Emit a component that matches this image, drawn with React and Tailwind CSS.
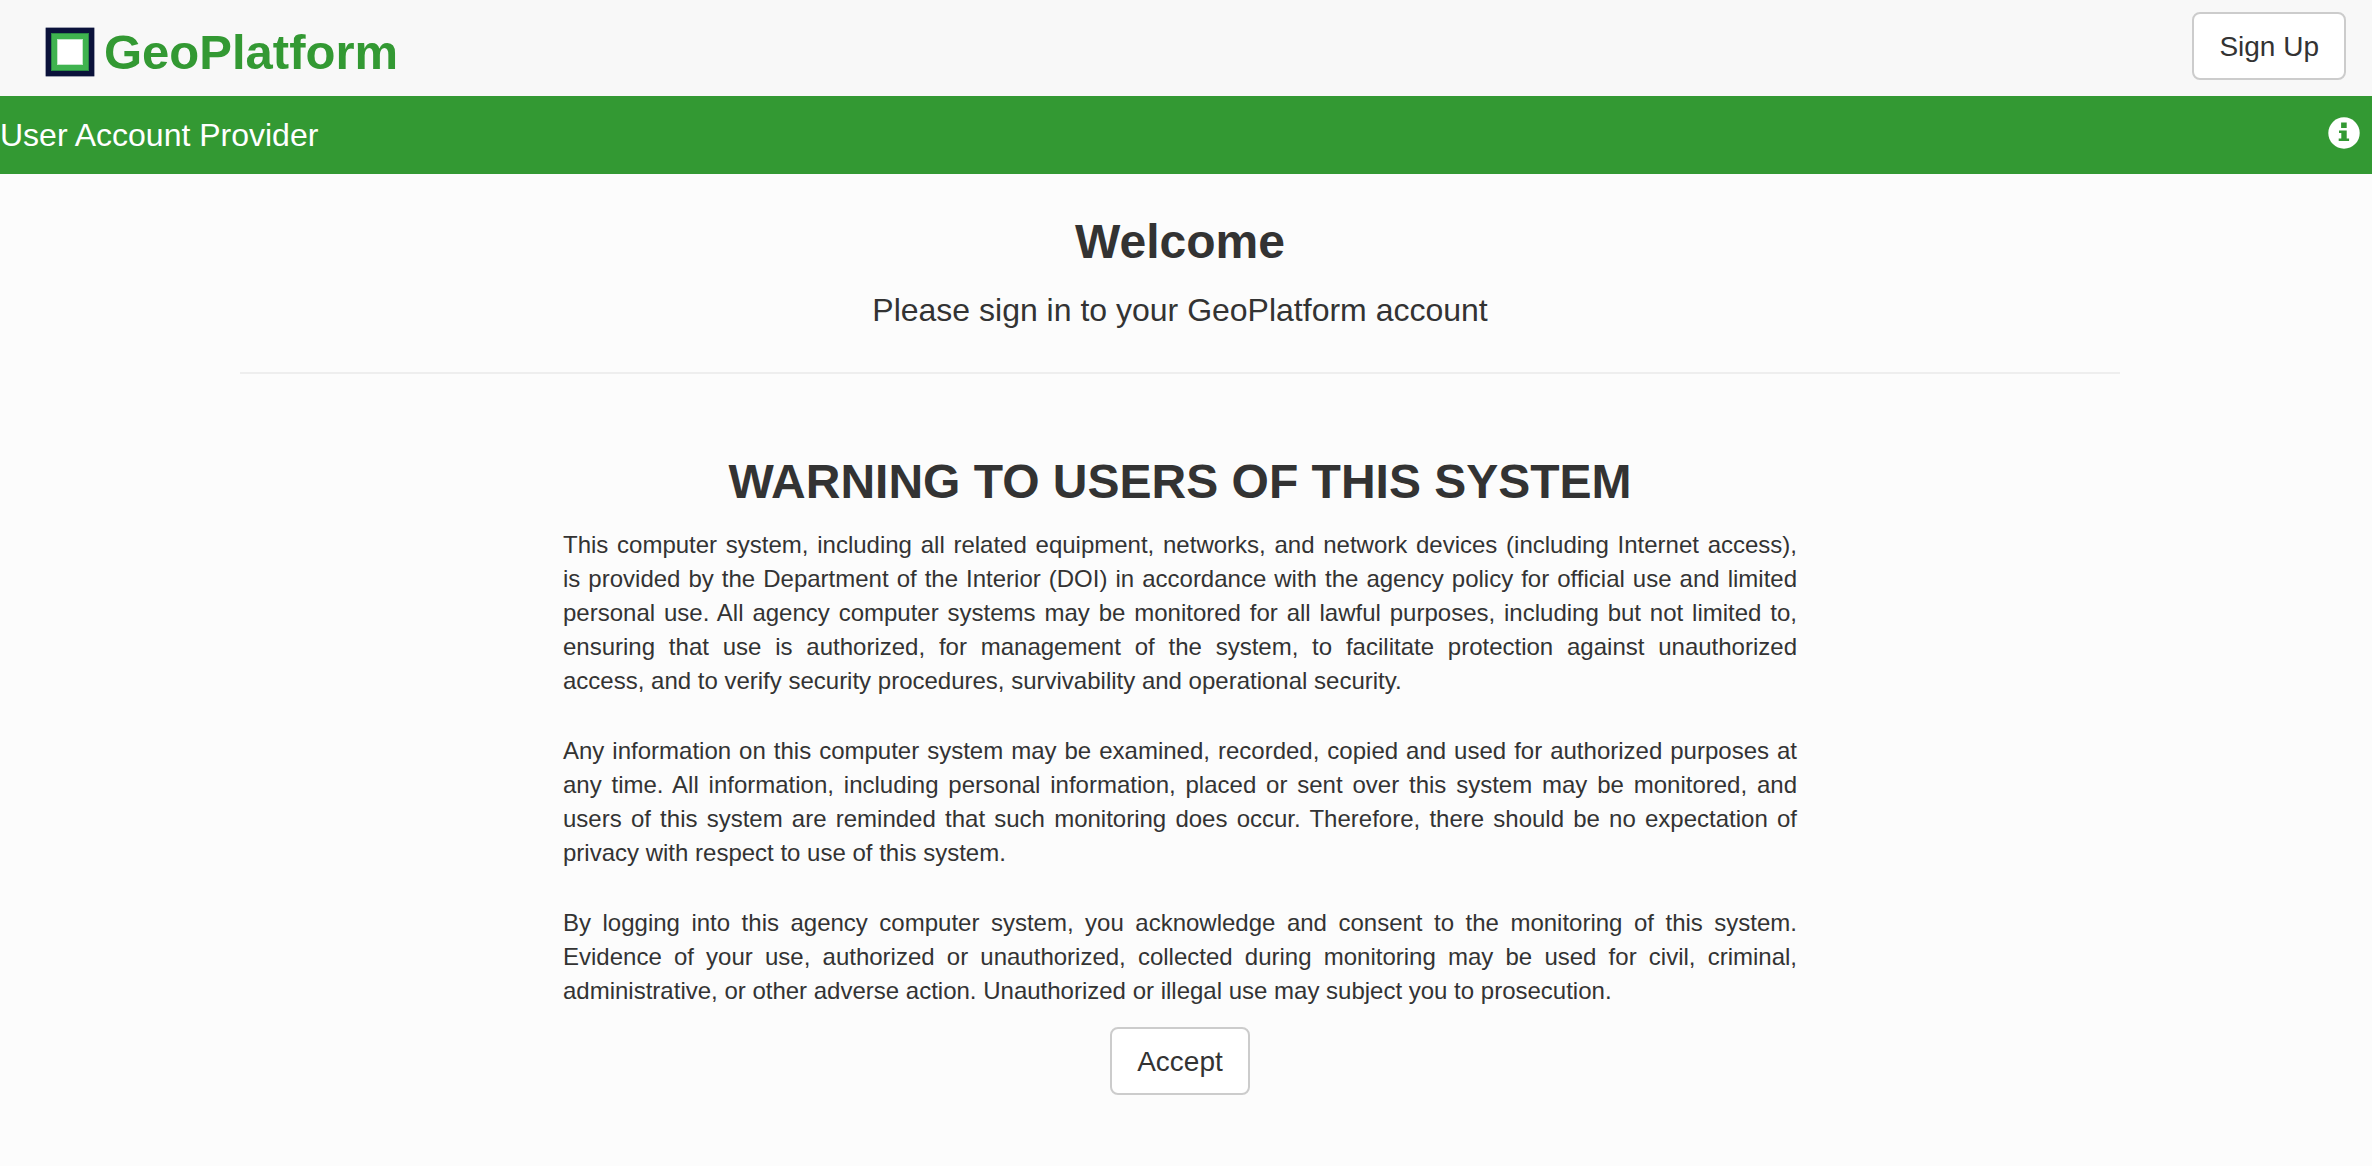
const paragraphs = [
  'This computer system, including all related equipment, networks, and network devices (including Internet access), is\u00a0provided by the Department of the Interior (DOI) in accordance with the agency policy for official use and limited personal use. All agency computer systems may be monitored for all lawful purposes, including but not limited to, ensuring that use is authorized, for management of the system, to facilitate protection against unauthorized access,\u00a0and to verify security procedures, survivability and operational security.',
  'Any information on this computer system may be examined, recorded, copied and used for authorized purposes at any time. All information, including personal information, placed or sent over this system may be monitored, and users of this system are reminded that such monitoring does occur. Therefore, there should be no expectation of privacy with respect to use of this system.',
  'By logging into this agency computer system, you acknowledge and consent to the monitoring of this system. Evidence of your use, authorized or unauthorized, collected during monitoring may be used for civil, criminal, administrative, or other adverse action. Unauthorized or illegal use may subject you to prosecution.',
];

function Button({ children }) {
  return (
    <button
      type="button"
      className="h-[68px] cursor-pointer rounded-lg border-2 border-[#cccccc] bg-white px-[25px] pt-0.5 text-[28px] leading-10 text-[#333333]"
    >
      {children}
    </button>
  );
}

function LogoMark() {
  return (
    <svg viewBox="0 0 50 50" className="size-[50px] shrink-0" aria-hidden="true">
      <rect width="50" height="50" fill="#ffffff" />
      <rect x="0.6" y="0.6" width="48.8" height="48.8" fill="#0b123b" />
      <rect x="6" y="6" width="38" height="38" fill="#2a8a45" />
      <rect x="7" y="7" width="36" height="36" fill="#3fb34f" />
      <rect x="12" y="12" width="26" height="26" fill="#c5e8ca" />
      <rect x="13" y="13" width="24" height="24" fill="#ffffff" />
    </svg>
  );
}

function InfoIcon() {
  return (
    <svg viewBox="0 0 32 32" className="size-8" aria-hidden="true">
      <circle cx="16" cy="16" r="15.7" fill="#ffffff" />
      <path
        d="M13.1 5.6h5.6v5.4h-5.6zM11 13.4h7.7v8h2.4v2.6H10.7v-2.6h2.6v-5.5H11z"
        fill="#339933"
      />
    </svg>
  );
}

export default function App() {
  return (
    <div className="min-h-screen bg-[#fcfcfc] font-['Liberation_Sans',Arial,sans-serif] text-[#333333]">
      <header className="flex items-start justify-between bg-[#f8f8f8] pt-3 pr-[26px] pb-4 pl-[45px]">
        <a href="#" className="flex items-center gap-[9px] pt-[15px] text-[49px] leading-[50px] font-bold text-[#339933]">
          <LogoMark />
          GeoPlatform
        </a>
        <Button>Sign Up</Button>
      </header>

      <div className="flex h-[78px] items-center justify-between bg-[#339933] pr-3 text-[32px] leading-10 text-white">
        <span>User Account Provider</span>
        <button type="button" aria-label="Information" className="cursor-pointer pb-1">
          <InfoIcon />
        </button>
      </div>

      <main className="mr-3 flex flex-col items-center">
        <h1 className="mt-10 text-5xl leading-[56px] font-bold">Welcome</h1>
        <p className="mt-5 text-[32px] leading-10">Please sign in to your GeoPlatform account</p>
        <div className="mt-[42px] w-full px-60">
          <hr className="border-t-2 border-[#eeeeee]" />
        </div>
        <section className="mt-20 flex w-full max-w-[1234px] flex-col items-center">
          <h2 className="text-5xl leading-[56px] font-bold">WARNING TO USERS OF THIS SYSTEM</h2>
          <div className="mt-[18px] flex flex-col gap-9 text-justify text-2xl leading-[34px]">
            {paragraphs.map((text) => (
              <p key={text}>{text}</p>
            ))}
          </div>
          <div className="mt-[19px]">
            <Button>Accept</Button>
          </div>
        </section>
      </main>
    </div>
  );
}
